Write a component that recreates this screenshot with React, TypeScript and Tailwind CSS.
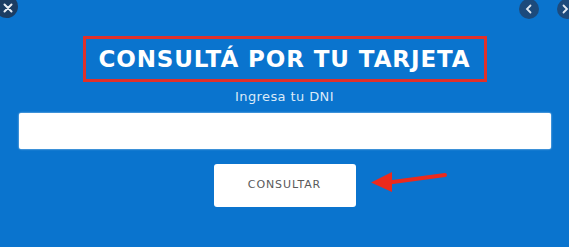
import React from 'react';

const font = { fontFamily: '"DejaVu Sans", "Liberation Sans", sans-serif' };

export default function App() {
  return (
    <div className="relative w-[569px] h-[247px] overflow-hidden bg-[#0a74ce]" style={font}>
      {/* close button, cut by the frame */}
      <div className="absolute -left-[5px] -top-[5px] w-[23px] h-[23px] rounded-full bg-[#1b3d63] flex items-center justify-center">
        <svg width="10" height="10" viewBox="0 0 10 10" className="ml-[3px] mt-[3px]">
          <path d="M1.5 1.5 L8.5 8.5 M8.5 1.5 L1.5 8.5" stroke="#e8eef5" strokeWidth="2" strokeLinecap="round" />
        </svg>
      </div>
      {/* slider arrows */}
      <div className="absolute left-[519px] -top-[1px] w-[20px] h-[20px] rounded-full bg-[#1c4a7c] flex items-center justify-center">
        <svg width="8" height="10" viewBox="0 0 8 10">
          <path d="M5.5 1.5 L2 5 L5.5 8.5" stroke="#dfe8f2" strokeWidth="1.8" fill="none" strokeLinecap="round" />
        </svg>
      </div>
      <div className="absolute left-[557px] -top-[1px] w-[20px] h-[20px] rounded-full bg-[#1c4a7c] flex items-center pl-[4px]">
        <svg width="8" height="10" viewBox="0 0 8 10">
          <path d="M2.5 1.5 L6 5 L2.5 8.5" stroke="#dfe8f2" strokeWidth="1.8" fill="none" strokeLinecap="round" />
        </svg>
      </div>

      <div className="flex flex-col items-center pt-[36px]">
        <div className="w-[404px] h-[46px] border-[3px] border-[#e0302a] flex items-center justify-center">
          <h1 className="text-[23px] font-bold text-white tracking-[0.9px] leading-none">CONSULTÁ POR TU TARJETA</h1>
        </div>
        <p className="mt-[7px] text-[13px] leading-[16px] tracking-[0.4px] text-[#dbeaf8]">Ingresa tu DNI</p>
        <div className="mt-[8px] w-[532px] h-[36px] bg-white rounded-[2px] shadow-[0_0_2px_rgba(255,255,255,0.8)]" />
        <div className="relative mt-[15px]">
          <button className="w-[142px] h-[43px] bg-white rounded-[3px] text-[11px] tracking-[0.9px] text-[#5a5a5a]">
            CONSULTAR
          </button>
          <svg className="absolute left-[155px] top-[4px]" width="80" height="28" viewBox="0 0 80 28">
            <path d="M20 14.5 L76 7" stroke="#ec2a1c" strokeWidth="4" strokeLinecap="round" />
            <path d="M2 14.5 L23 4 L23 24 Z" fill="#ec2a1c" />
          </svg>
        </div>
      </div>
    </div>
  );
}
